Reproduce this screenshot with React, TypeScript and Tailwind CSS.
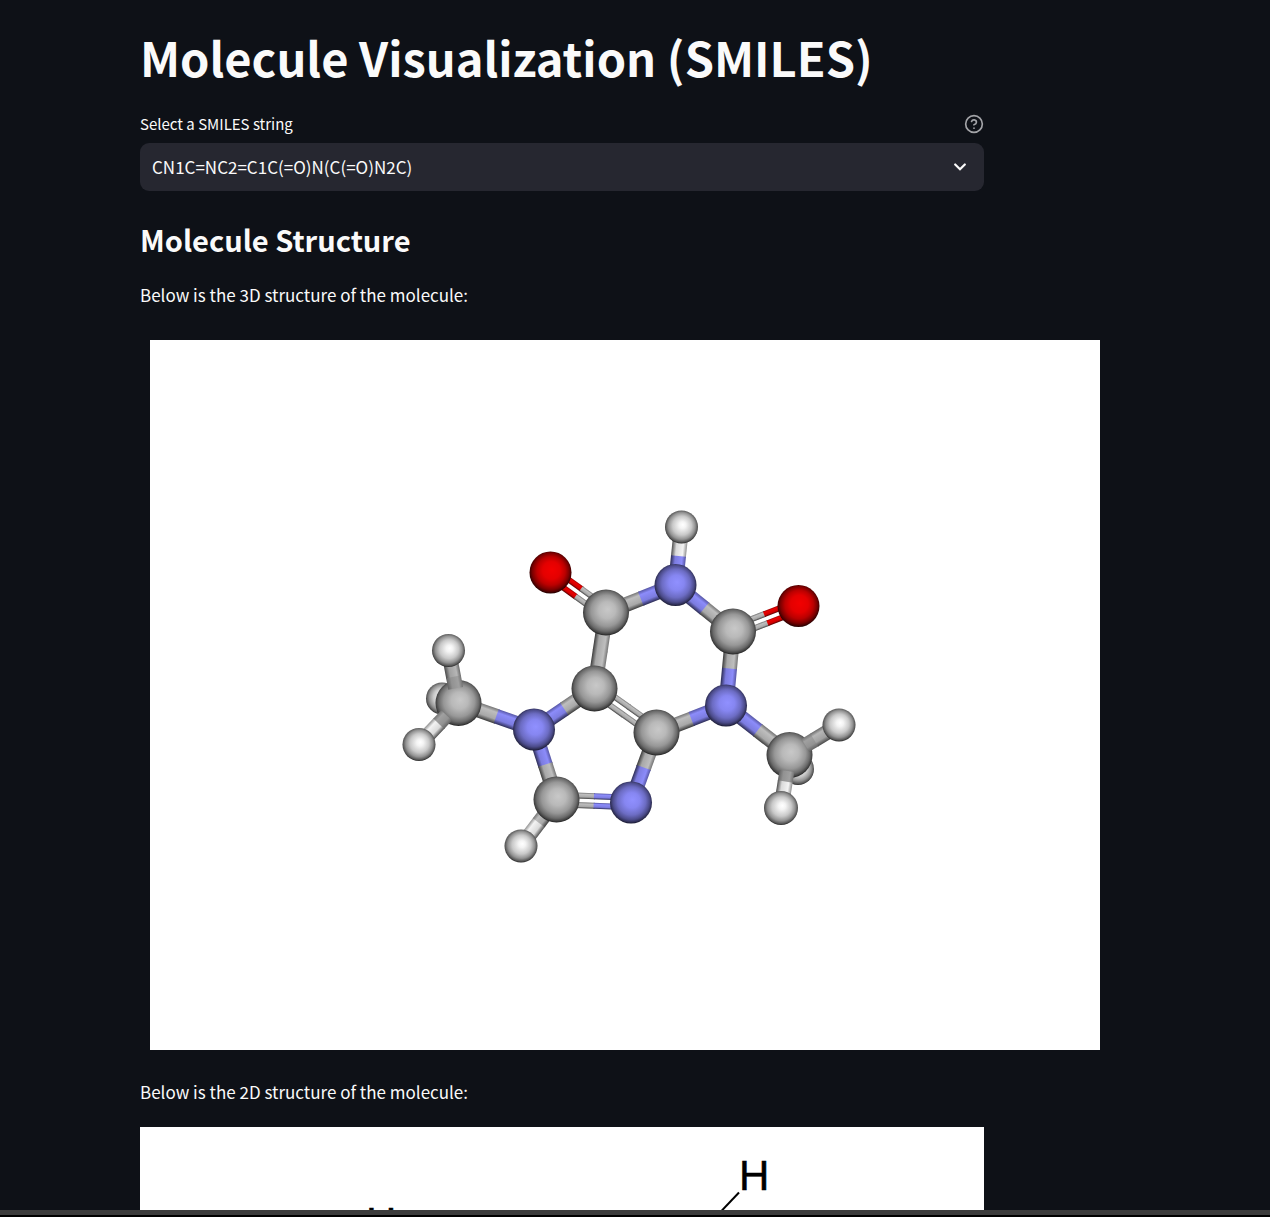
import { useId, useState } from "react";

type Element = "C" | "N" | "O" | "H";
type Tone = Element | "shade" | "dim";

interface Atom {
  el: Element;
  x: number;
  y: number;
  r: number;
}

interface Bond {
  a: string;
  b: string;
  order?: 1 | 2;
  toneA?: Tone;
  toneB?: Tone;
  from?: number;
}

const ATOMS: Record<string, Atom> = {
  o1: { el: "O", x: 550.5, y: 572.5, r: 21 },
  c1: { el: "C", x: 606, y: 612.5, r: 23 },
  n1: { el: "N", x: 675.5, y: 585, r: 21 },
  h1: { el: "H", x: 681.5, y: 527, r: 16.5 },
  c2: { el: "C", x: 733, y: 631.5, r: 23 },
  o2: { el: "O", x: 798.5, y: 606, r: 21 },
  c3: { el: "C", x: 594.5, y: 688.5, r: 23 },
  c4: { el: "C", x: 656.5, y: 732.5, r: 23 },
  n2: { el: "N", x: 726, y: 705.5, r: 21 },
  n3: { el: "N", x: 534, y: 729.5, r: 21 },
  n4: { el: "N", x: 631, y: 802.5, r: 21 },
  c5: { el: "C", x: 556.5, y: 799.5, r: 23 },
  h2: { el: "H", x: 521, y: 846, r: 16.5 },
  c6: { el: "C", x: 458.5, y: 703, r: 23 },
  h3: { el: "H", x: 448.5, y: 650.5, r: 16.5 },
  h4: { el: "H", x: 419, y: 744.5, r: 16.5 },
  h5: { el: "H", x: 442, y: 698.5, r: 16 },
  c7: { el: "C", x: 789.5, y: 755, r: 23 },
  h6: { el: "H", x: 839, y: 725, r: 16.5 },
  h7: { el: "H", x: 781, y: 808, r: 17 },
  h8: { el: "H", x: 798, y: 769, r: 16 },
};

const BACK_ATOMS = ["h5", "h8"];

const BACK_BONDS: Bond[] = [
  { a: "o1", b: "c1", order: 2 },
  { a: "c1", b: "n1" },
  { a: "n1", b: "h1" },
  { a: "n1", b: "c2" },
  { a: "c2", b: "o2", order: 2 },
  { a: "c2", b: "n2" },
  { a: "c1", b: "c3" },
  { a: "c3", b: "c4", order: 2 },
  { a: "c4", b: "n2" },
  { a: "c3", b: "n3" },
  { a: "n3", b: "c5" },
  { a: "c5", b: "n4", order: 2 },
  { a: "c4", b: "n4" },
  { a: "c5", b: "h2" },
  { a: "c6", b: "n3" },
  { a: "n2", b: "c7" },
];

const MIDDLE_ATOMS = ["o1", "c1", "n1", "h1", "c2", "o2", "c3", "c4", "n2", "n3", "n4", "c5", "h2", "c6", "c7"];

const FRONT_BONDS: Bond[] = [
  { a: "c6", b: "h3", toneA: "dim", toneB: "shade", from: 0.28 },
  { a: "c6", b: "h4", toneA: "dim", from: 0.3 },
  { a: "c7", b: "h6", toneA: "dim", toneB: "shade", from: 0.32 },
  { a: "c7", b: "h7", toneA: "dim", from: 0.3 },
];

const FRONT_ATOMS = ["h3", "h4", "h6", "h7"];

const SPHERES: Record<Element, [string, string][]> = {
  C: [["0%", "#c8c8c8"], ["35%", "#b9b9b9"], ["65%", "#979797"], ["84%", "#6b6b6b"], ["94%", "#444444"], ["100%", "#202020"]],
  N: [["0%", "#9090ff"], ["35%", "#8686f1"], ["65%", "#6c6cc3"], ["84%", "#4c4c8b"], ["94%", "#303058"], ["100%", "#181830"]],
  O: [["0%", "#f20000"], ["40%", "#e40000"], ["65%", "#bb0000"], ["84%", "#7c0000"], ["94%", "#480000"], ["100%", "#200000"]],
  H: [["0%", "#ffffff"], ["20%", "#f4f4f4"], ["55%", "#c9c9c9"], ["78%", "#939393"], ["93%", "#575757"], ["100%", "#282828"]],
};

const TUBES: Record<Tone, [string, string, string, string]> = {
  C: ["#747474", "#bebebe", "#a8a8a8", "#3c3c3c"],
  N: ["#5656a4", "#8c8cfa", "#7c7ce0", "#2c2c55"],
  O: ["#980000", "#ec0000", "#d00000", "#500000"],
  H: ["#929292", "#f3f3f3", "#dadada", "#4e4e4e"],
  shade: ["#6c6c6c", "#b6b6b6", "#a0a0a0", "#4a4a4a"],
  dim: ["#747474", "#a0a0a0", "#929292", "#636363"],
};

function Sphere({ atom, uid }: { atom: Atom; uid: string }) {
  return <circle cx={atom.x} cy={atom.y} r={atom.r} fill={`url(#${uid}-ball-${atom.el})`} />;
}

function Tube({ bond, uid }: { bond: Bond; uid: string }) {
  const first = ATOMS[bond.a];
  const second = ATOMS[bond.b];
  let angle = (Math.atan2(second.y - first.y, second.x - first.x) * 180) / Math.PI;
  const flip = angle > 113 || angle < -67;
  const start = flip ? second : first;
  const end = flip ? first : second;
  angle = (Math.atan2(end.y - start.y, end.x - start.x) * 180) / Math.PI;
  const length = Math.hypot(end.x - start.x, end.y - start.y);
  const firstTone = bond.toneA ?? first.el;
  const secondTone = bond.toneB ?? second.el;
  const startTone = flip ? secondTone : firstTone;
  const endTone = flip ? firstTone : secondTone;
  const cut = (bond.from ?? 0) * length;
  const x0 = flip ? 0 : cut;
  const x1 = flip ? length - cut : length;
  const rows = bond.order === 2 ? [-4.8, 4.8] : [0];
  const width = bond.order === 2 ? 6 : 15;
  const middle = length / 2;

  return (
    <g transform={`translate(${start.x} ${start.y}) rotate(${angle})`}>
      {rows.map((offset) => (
        <g key={offset}>
          <rect x={x0} y={offset - width / 2} width={middle - x0 + 1} height={width} fill={`url(#${uid}-tube-${startTone})`} />
          <rect x={middle} y={offset - width / 2} width={x1 - middle} height={width} fill={`url(#${uid}-tube-${endTone})`} />
        </g>
      ))}
    </g>
  );
}

function Molecule3D() {
  const uid = useId().replace(/[^a-zA-Z0-9]/g, "");
  return (
    <svg viewBox="150 340 950 710" className="block w-full" role="img" aria-label="3D structure of the molecule">
      <defs>
        {Object.entries(SPHERES).map(([el, stops]) => (
          <radialGradient key={el} id={`${uid}-ball-${el}`} cx="0.5" cy="0.48" r="0.52" fx="0.54" fy="0.43">
            {stops.map(([offset, color]) => (
              <stop key={offset} offset={offset} stopColor={color} />
            ))}
          </radialGradient>
        ))}
        {Object.entries(TUBES).map(([tone, colors]) => (
          <linearGradient key={tone} id={`${uid}-tube-${tone}`} x1="0" y1="0" x2="0" y2="1">
            <stop offset="0%" stopColor={colors[0]} />
            <stop offset="25%" stopColor={colors[1]} />
            <stop offset="70%" stopColor={colors[2]} />
            <stop offset="100%" stopColor={colors[3]} />
          </linearGradient>
        ))}
      </defs>
      {BACK_ATOMS.map((id) => <Sphere key={id} atom={ATOMS[id]} uid={uid} />)}
      {BACK_BONDS.map((bond) => <Tube key={bond.a + bond.b} bond={bond} uid={uid} />)}
      {MIDDLE_ATOMS.map((id) => <Sphere key={id} atom={ATOMS[id]} uid={uid} />)}
      {FRONT_BONDS.map((bond) => <Tube key={bond.a + bond.b} bond={bond} uid={uid} />)}
      {FRONT_ATOMS.map((id) => <Sphere key={id} atom={ATOMS[id]} uid={uid} />)}
    </svg>
  );
}

function Molecule2D() {
  return (
    <svg viewBox="140 1127 844 500" className="block w-full" role="img" aria-label="2D structure of the molecule">
      <g fill="#000" stroke="#000" strokeWidth="0.5" fontFamily="'Liberation Sans', Arial, sans-serif" fontSize="42">
        <text x="739" y="1190">H</text>
        <text x="366" y="1237">H</text>
      </g>
      <path d="M739 1192.500L690 1244" stroke="#000" strokeWidth="2" />
    </svg>
  );
}

function HelpIcon() {
  return (
    <svg viewBox="0 0 24 24" className="size-5" fill="none" stroke="currentColor" strokeWidth="2" strokeLinecap="round" strokeLinejoin="round" aria-hidden="true">
      <circle cx="12" cy="12" r="10" />
      <path d="M9.090 9a3 3 0 0 1 5.830 1c0 2-3 3-3 3" />
      <path d="M12 17h.01" />
    </svg>
  );
}

const OPTIONS = ["CN1C=NC2=C1C(=O)N(C(=O)N2C)"];

export default function App() {
  const [smiles, setSmiles] = useState(OPTIONS[0]);

  return (
    <div className="flex h-screen flex-col bg-[#0e1117] font-['Noto_Sans_CJK_SC','Noto_Sans',sans-serif] text-[#fafafa]">
      <main className="min-h-0 flex-1 overflow-hidden px-[140px] pt-[29px]">
        <div className="max-w-[844px]">
          <h1 className="text-[47px] leading-[56px] font-bold whitespace-nowrap">Molecule Visualization (SMILES)</h1>

          <div className="mt-[27px] flex h-6 items-center justify-between">
            <label htmlFor="smiles" className="text-[15px] leading-6">Select a SMILES string</label>
            <button type="button" aria-label="Help" className="text-[#a3a4a8]">
              <HelpIcon />
            </button>
          </div>
          <div className="relative mt-[7px]">
            <select
              id="smiles"
              value={smiles}
              onChange={(event) => setSmiles(event.target.value)}
              className="block h-12 w-full appearance-none rounded-[9px] bg-[#262730] pr-12 pl-3 text-[17px] outline-none"
            >
              {OPTIONS.map((option) => (
                <option key={option}>{option}</option>
              ))}
            </select>
            <svg viewBox="0 0 12 8" className="pointer-events-none absolute top-5 right-[18px] h-2 w-3" fill="none" stroke="currentColor" strokeWidth="2.2" strokeLinecap="round" aria-hidden="true">
              <path d="M1.200 1.500L6 6.300L10.800 1.500" />
            </svg>
          </div>

          <h2 className="mt-7 text-[29px] leading-10 font-bold">Molecule Structure</h2>
          <p className="mt-[22px] text-[17px] leading-7">Below is the 3D structure of the molecule:</p>
        </div>

        <div className="mt-[31px] ml-[10px] -mr-[110px] max-w-[950px] bg-white">
          <Molecule3D />
        </div>

        <div className="max-w-[844px]">
          <p className="mt-7 text-[17px] leading-7">Below is the 2D structure of the molecule:</p>
          <div className="mt-[21px] bg-white">
            <Molecule2D />
          </div>
        </div>
      </main>
      <footer className="h-[7px] shrink-0 border-b-2 border-black bg-[#3c3c3c]" />
    </div>
  );
}
